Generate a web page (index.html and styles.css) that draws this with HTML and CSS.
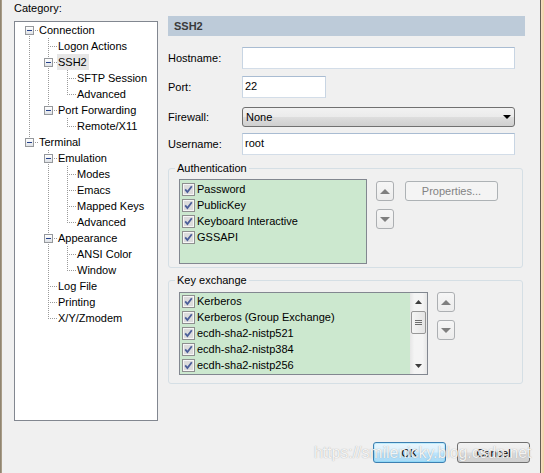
FILE: index.html
```html
<!DOCTYPE html>
<html>
<head>
<meta charset="utf-8">
<link rel="stylesheet" href="styles.css">
</head>
<body>
<div class="window">
  <div class="edge-left"></div>
  <div class="main">
    <div class="top">
      <div class="left">
        <div class="cat-label">Category:</div>
        <div class="tree">
          <div class="node"><span class="c first"><span class="exp"></span></span><span class="lbl">Connection</span></div>
          <div class="node"><span class="g v"></span><span class="c mid"></span><span class="lbl">Logon Actions</span></div>
          <div class="node"><span class="g v"></span><span class="c mid"><span class="exp"></span></span><span class="lbl sel">SSH2</span></div>
          <div class="node"><span class="g v"></span><span class="g v"></span><span class="c mid"></span><span class="lbl">SFTP Session</span></div>
          <div class="node"><span class="g v"></span><span class="g v"></span><span class="c last"></span><span class="lbl">Advanced</span></div>
          <div class="node"><span class="g v"></span><span class="c last"><span class="exp"></span></span><span class="lbl">Port Forwarding</span></div>
          <div class="node"><span class="g v"></span><span class="g"></span><span class="c last"></span><span class="lbl">Remote/X11</span></div>
          <div class="node"><span class="c last"><span class="exp"></span></span><span class="lbl">Terminal</span></div>
          <div class="node"><span class="g"></span><span class="c mid"><span class="exp"></span></span><span class="lbl">Emulation</span></div>
          <div class="node"><span class="g"></span><span class="g v"></span><span class="c mid"></span><span class="lbl">Modes</span></div>
          <div class="node"><span class="g"></span><span class="g v"></span><span class="c mid"></span><span class="lbl">Emacs</span></div>
          <div class="node"><span class="g"></span><span class="g v"></span><span class="c mid"></span><span class="lbl">Mapped Keys</span></div>
          <div class="node"><span class="g"></span><span class="g v"></span><span class="c last"></span><span class="lbl">Advanced</span></div>
          <div class="node"><span class="g"></span><span class="c mid"><span class="exp"></span></span><span class="lbl">Appearance</span></div>
          <div class="node"><span class="g"></span><span class="g v"></span><span class="c mid"></span><span class="lbl">ANSI Color</span></div>
          <div class="node"><span class="g"></span><span class="g v"></span><span class="c last"></span><span class="lbl">Window</span></div>
          <div class="node"><span class="g"></span><span class="c mid"></span><span class="lbl">Log File</span></div>
          <div class="node"><span class="g"></span><span class="c mid"></span><span class="lbl">Printing</span></div>
          <div class="node"><span class="g"></span><span class="c last"></span><span class="lbl">X/Y/Zmodem</span></div>
        </div>
      </div>

      <div class="right">
        <div class="title-bar">SSH2</div>

        <div class="frow r-host"><span class="flabel">Hostname:</span><div class="field wide"></div></div>
        <div class="frow r-port"><span class="flabel">Port:</span><div class="field narrow">22</div></div>
        <div class="frow r-fw"><span class="flabel">Firewall:</span>
          <div class="select"><span>None</span>
            <svg class="dd" width="8" height="4" viewBox="0 0 8 4"><path d="M0 0H8L4 4Z" fill="#000"/></svg>
          </div>
        </div>
        <div class="frow r-user"><span class="flabel">Username:</span><div class="field wide">root</div></div>

        <div class="group auth">
          <div class="group-title">Authentication</div>
          <div class="group-body">
            <div class="list alist">
              <div class="item"><svg class="cb" viewBox="0 0 13 13"><rect x=".5" y=".5" width="12" height="12" fill="#f6f6f6" stroke="#8e8f8f"/><rect x="2" y="2" width="9" height="9" fill="#dcdcdc"/><path d="M3.2 6.4L5.4 9L9.8 3.2" fill="none" stroke="#4b5f99" stroke-width="1.8"/></svg><span>Password</span></div>
              <div class="item"><svg class="cb" viewBox="0 0 13 13"><rect x=".5" y=".5" width="12" height="12" fill="#f6f6f6" stroke="#8e8f8f"/><rect x="2" y="2" width="9" height="9" fill="#dcdcdc"/><path d="M3.2 6.4L5.4 9L9.8 3.2" fill="none" stroke="#4b5f99" stroke-width="1.8"/></svg><span>PublicKey</span></div>
              <div class="item"><svg class="cb" viewBox="0 0 13 13"><rect x=".5" y=".5" width="12" height="12" fill="#f6f6f6" stroke="#8e8f8f"/><rect x="2" y="2" width="9" height="9" fill="#dcdcdc"/><path d="M3.2 6.4L5.4 9L9.8 3.2" fill="none" stroke="#4b5f99" stroke-width="1.8"/></svg><span>Keyboard Interactive</span></div>
              <div class="item"><svg class="cb" viewBox="0 0 13 13"><rect x=".5" y=".5" width="12" height="12" fill="#f6f6f6" stroke="#8e8f8f"/><rect x="2" y="2" width="9" height="9" fill="#dcdcdc"/><path d="M3.2 6.4L5.4 9L9.8 3.2" fill="none" stroke="#4b5f99" stroke-width="1.8"/></svg><span>GSSAPI</span></div>
            </div>
            <div class="arrows a-auth">
              <div class="arrow-btn"><svg width="10" height="5" viewBox="0 0 10 5"><path d="M0 5L5 0L10 5Z" fill="#7f7f7f"/></svg></div>
              <div class="arrow-btn"><svg width="10" height="5" viewBox="0 0 10 5"><path d="M0 0L5 5L10 0Z" fill="#7f7f7f"/></svg></div>
            </div>
            <div class="btn props">Properties...</div>
          </div>
        </div>

        <div class="group kex">
          <div class="group-title">Key exchange</div>
          <div class="group-body">
            <div class="list klist">
              <div class="items">
                <div class="item"><svg class="cb" viewBox="0 0 13 13"><rect x=".5" y=".5" width="12" height="12" fill="#f6f6f6" stroke="#8e8f8f"/><rect x="2" y="2" width="9" height="9" fill="#dcdcdc"/><path d="M3.2 6.4L5.4 9L9.8 3.2" fill="none" stroke="#4b5f99" stroke-width="1.8"/></svg><span>Kerberos</span></div>
                <div class="item"><svg class="cb" viewBox="0 0 13 13"><rect x=".5" y=".5" width="12" height="12" fill="#f6f6f6" stroke="#8e8f8f"/><rect x="2" y="2" width="9" height="9" fill="#dcdcdc"/><path d="M3.2 6.4L5.4 9L9.8 3.2" fill="none" stroke="#4b5f99" stroke-width="1.8"/></svg><span>Kerberos (Group Exchange)</span></div>
                <div class="item"><svg class="cb" viewBox="0 0 13 13"><rect x=".5" y=".5" width="12" height="12" fill="#f6f6f6" stroke="#8e8f8f"/><rect x="2" y="2" width="9" height="9" fill="#dcdcdc"/><path d="M3.2 6.4L5.4 9L9.8 3.2" fill="none" stroke="#4b5f99" stroke-width="1.8"/></svg><span>ecdh-sha2-nistp521</span></div>
                <div class="item"><svg class="cb" viewBox="0 0 13 13"><rect x=".5" y=".5" width="12" height="12" fill="#f6f6f6" stroke="#8e8f8f"/><rect x="2" y="2" width="9" height="9" fill="#dcdcdc"/><path d="M3.2 6.4L5.4 9L9.8 3.2" fill="none" stroke="#4b5f99" stroke-width="1.8"/></svg><span>ecdh-sha2-nistp384</span></div>
                <div class="item"><svg class="cb" viewBox="0 0 13 13"><rect x=".5" y=".5" width="12" height="12" fill="#f6f6f6" stroke="#8e8f8f"/><rect x="2" y="2" width="9" height="9" fill="#dcdcdc"/><path d="M3.2 6.4L5.4 9L9.8 3.2" fill="none" stroke="#4b5f99" stroke-width="1.8"/></svg><span>ecdh-sha2-nistp256</span></div>
              </div>
              <div class="sb">
                <div class="sb-btn"><svg width="7" height="4" viewBox="0 0 7 4"><path d="M0 4L3.5 0L7 4Z" fill="#3c3c3c"/></svg></div>
                <div class="thumb"><svg width="7" height="5" viewBox="0 0 7 5"><path d="M0 .5H7M0 2.5H7M0 4.5H7" stroke="#6e6e6e" stroke-width="1"/></svg></div>
                <div class="sb-space"></div>
                <div class="sb-btn"><svg width="7" height="4" viewBox="0 0 7 4"><path d="M0 0L3.5 4L7 0Z" fill="#3c3c3c"/></svg></div>
              </div>
            </div>
            <div class="arrows a-kex">
              <div class="arrow-btn"><svg width="10" height="5" viewBox="0 0 10 5"><path d="M0 5L5 0L10 5Z" fill="#7f7f7f"/></svg></div>
              <div class="arrow-btn"><svg width="10" height="5" viewBox="0 0 10 5"><path d="M0 0L5 5L10 0Z" fill="#7f7f7f"/></svg></div>
            </div>
          </div>
        </div>
      </div>
    </div>

    <div class="footer">
      <div class="btn dlg default">OK</div>
      <div class="btn dlg">Cancel</div>
    </div>
  </div>
  <div class="edge-right"></div>
  <div class="watermark">https://smilenicky.blog.csdn.net</div>
</div>
</body>
</html>
```
FILE: styles.css
```css
html, body {
  margin: 0;
  padding: 0;
}
body {
  background: #f0f0f0;
  font-family: "Liberation Sans", Arial, sans-serif;
  font-size: 11px;
  line-height: 16px;
  color: #000;
}
.window {
  position: relative;
  display: flex;
  width: 544px;
  height: 473px;
  overflow: hidden;
}
.edge-left {
  width: 2px;
  background: linear-gradient(to right, #857a66, #b3a792);
}
.edge-right {
  width: 3px;
  border-left: 1px solid #655d53;
  background: linear-gradient(to right, #f7e0c6, #f1cfa6);
}
.main {
  flex: 1;
  display: flex;
  flex-direction: column;
}
.top {
  display: flex;
  height: 421px;
  padding-left: 12px;
}
.left {
  width: 144px;
  display: flex;
  flex-direction: column;
}
.cat-label {
  height: 16px;
}
.tree {
  margin-top: 5px;
  height: 400px;
  box-sizing: border-box;
  border: 1px solid #828790;
  background: #fff;
  padding-left: 5px;
}
.node {
  display: flex;
  height: 16px;
}
.g, .c {
  width: 19px;
  height: 16px;
  flex: none;
  box-sizing: border-box;
  background-repeat: no-repeat;
}
.g.v {
  background-image: repeating-linear-gradient(to bottom, #9a9a9a 0 1px, transparent 1px 2px);
  background-position: 9px 0;
  background-size: 1px 16px;
}
.c {
  display: flex;
  align-items: flex-start;
  padding: 4px 0 0 5px;
  background-image:
    repeating-linear-gradient(to right, #9a9a9a 0 1px, transparent 1px 2px),
    repeating-linear-gradient(to bottom, #9a9a9a 0 1px, transparent 1px 2px);
  background-position: 9px 8px, 9px 0;
  background-size: 10px 1px, 1px 16px;
}
.c.last {
  background-size: 10px 1px, 1px 8px;
}
.c.first {
  background-position: 9px 8px, 9px 8px;
  background-size: 10px 1px, 1px 8px;
}
.exp {
  width: 9px;
  height: 9px;
  box-sizing: border-box;
  border: 1px solid #95989c;
  background:
    linear-gradient(#23408a, #23408a) 1px 3px / 5px 1px no-repeat,
    linear-gradient(#ffffff, #dfe2e6);
}
.lbl {
  white-space: nowrap;
  padding: 0 2px 0 1px;
  margin-left: -1px;
}
.lbl.sel {
  background: #e6e6e6;
}

.right {
  width: 357px;
  margin-left: 10px;
  padding-top: 16px;
}
.title-bar {
  height: 20px;
  line-height: 20px;
  background: #bdcbd9;
  color: #3a3a3a;
  font-weight: bold;
  padding-left: 6px;
}
.frow {
  display: flex;
  align-items: center;
}
.flabel {
  width: 74px;
  flex: none;
}
.r-host { margin-top: 11px; }
.r-port { margin-top: 7px; }
.r-fw { margin-top: 9px; }
.r-user { margin-top: 6px; }
.field {
  height: 22px;
  box-sizing: border-box;
  border: 1px solid;
  border-color: #a9bcd2 #c8d5e3 #d3dde8 #c8d5e3;
  background: #fff;
  padding-left: 2px;
  line-height: 19px;
}
.field.wide { width: 273px; }
.field.narrow { width: 84px; }
.select {
  width: 273px;
  height: 20px;
  box-sizing: border-box;
  border: 1px solid #707070;
  border-radius: 3px;
  background: linear-gradient(#f2f2f2 0%, #ebebeb 48%, #dddddd 52%, #cfcfcf 100%);
  display: flex;
  align-items: center;
  justify-content: space-between;
  padding: 0 3px 0 3px;
}
.dd {
  display: block;
}

.group {
  margin-right: 2px;
  border: 1px solid #d5dfe5;
  border-radius: 3px;
  padding-left: 10px;
}
.group.auth {
  margin-top: 13px;
  padding-bottom: 3px;
}
.group.kex {
  margin-top: 12px;
  padding-bottom: 8px;
}
.group-title {
  width: max-content;
  margin: -8px 0 0 -4px;
  padding: 0 2px;
  line-height: 14px;
  background: #f0f0f0;
}
.group-body {
  display: flex;
  align-items: flex-start;
  margin-top: 4px;
}
.kex .group-body {
  margin-top: 5px;
}
.list {
  box-sizing: border-box;
  border: 1px solid #828790;
  background: #cce8cf;
}
.alist {
  width: 188px;
  height: 85px;
  padding-top: 1px;
}
.klist {
  width: 249px;
  height: 83px;
  display: flex;
}
.items {
  flex: 1;
}
.item {
  display: flex;
  align-items: center;
  height: 16px;
  padding-left: 2px;
  white-space: nowrap;
}
.cb {
  width: 13px;
  height: 13px;
  flex: none;
  margin-right: 2px;
  display: block;
}
.sb {
  width: 17px;
  display: flex;
  flex-direction: column;
  align-items: center;
  background: linear-gradient(to right, #e6e6e6, #f4f4f4 25%, #f4f4f4 75%, #e6e6e6);
}
.sb-btn {
  width: 17px;
  height: 17px;
  display: flex;
  align-items: center;
  justify-content: center;
}
.sb-btn svg, .arrow-btn svg, .thumb svg {
  display: block;
}
.thumb {
  width: 15px;
  height: 23px;
  margin-top: 1px;
  box-sizing: border-box;
  border: 1px solid #979797;
  border-radius: 2px;
  background: linear-gradient(to right, #f5f5f5, #e4e4e4);
  display: flex;
  align-items: center;
  justify-content: center;
}
.sb-space {
  flex: 1;
}
.arrows {
  display: flex;
  flex-direction: column;
  gap: 8px;
  margin-left: 9px;
}
.a-auth {
  margin-top: 2px;
}
.arrow-btn {
  width: 18px;
  height: 20px;
  box-sizing: border-box;
  border: 1px solid #acafb2;
  border-radius: 3px;
  background: linear-gradient(#f6f6f6, #ececec);
  display: flex;
  align-items: center;
  justify-content: center;
}
.btn {
  box-sizing: border-box;
  border-radius: 3px;
  display: flex;
  align-items: center;
  justify-content: center;
}
.props {
  width: 93px;
  height: 20px;
  margin: 2px 0 0 11px;
  border: 1px solid #adb2b5;
  background: #f4f4f4;
  color: #838383;
}
.footer {
  display: flex;
  justify-content: flex-end;
  gap: 11px;
  padding-right: 10px;
  margin-top: 21px;
}
.dlg {
  width: 73px;
  height: 21px;
  border: 1px solid #707070;
  background: linear-gradient(#f2f2f2 0%, #ebebeb 48%, #dddddd 52%, #cfcfcf 100%);
}
.dlg.default {
  border-color: #3c7fb1;
  background: linear-gradient(#eaf6fd 0%, #d9f0fc 48%, #bee6fd 52%, #a7d9f5 100%);
  box-shadow: inset 0 0 0 1px #48d3fb40;
}
.watermark {
  position: absolute;
  left: 314px;
  top: 444px;
  font-size: 15.8px;
  line-height: 18px;
  color: rgba(255, 255, 255, 0.88);
  text-shadow: 0 0 1px rgba(90, 90, 90, 0.55);
  white-space: nowrap;
  pointer-events: none;
}
```
